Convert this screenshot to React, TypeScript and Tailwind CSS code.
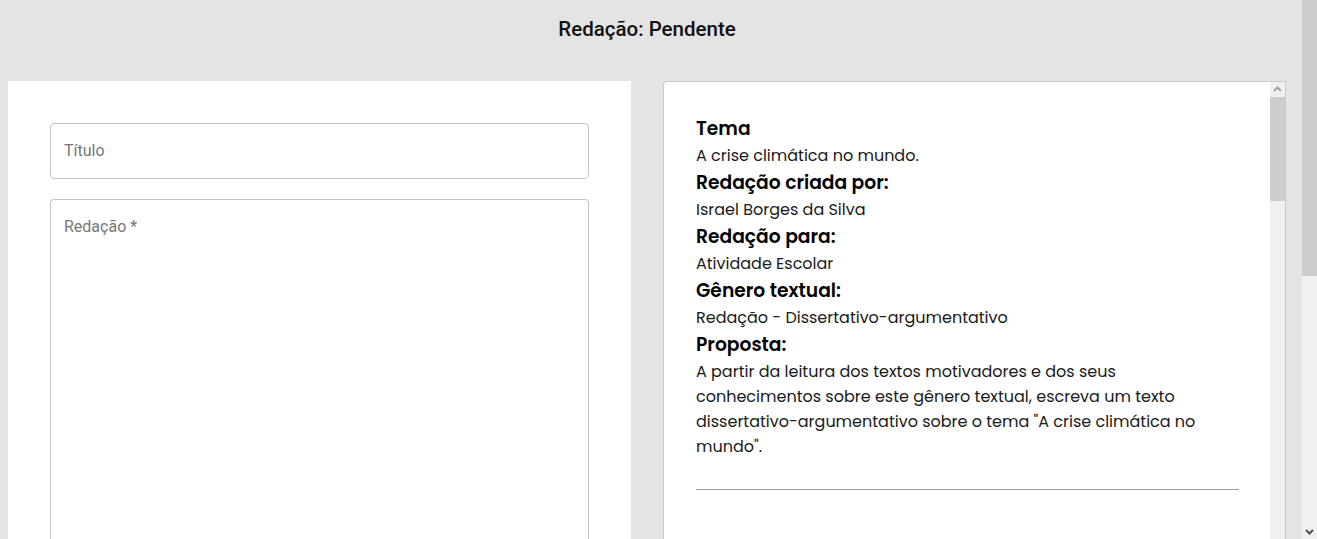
import React from 'react';

const info = [
  { label: 'Tema', value: 'A crise climática no mundo.' },
  { label: 'Redação criada por:', value: 'Israel Borges da Silva' },
  { label: 'Redação para:', value: 'Atividade Escolar' },
  { label: 'Gênero textual:', value: 'Redação - Dissertativo-argumentativo' },
  {
    label: 'Proposta:',
    value:
      'A partir da leitura dos textos motivadores e dos seus conhecimentos sobre este gênero textual, escreva um texto dissertativo-argumentativo sobre o tema "A crise climática no mundo".',
  },
];

function ScrollArrow({ up }: { up?: boolean }) {
  return (
    <svg width="15" height="15" viewBox="0 0 15 15" className="block">
      <path
        d={up ? 'M4 9 L7.5 5.5 L11 9' : 'M4 6 L7.5 9.5 L11 6'}
        fill="none"
        stroke={up ? '#a3a3a3' : '#505050'}
        strokeWidth="2"
      />
    </svg>
  );
}

export default function App() {
  return (
    <div className="flex h-[539px] w-[1317px] overflow-hidden bg-[#e4e4e4]">
      <div className="flex-1 flex flex-col">
        {/* header */}
        <div className="h-[81px] flex justify-center pt-[15px] pr-[8px]">
          <h1 className="text-[20.5px] leading-[28px] font-medium text-[#111] font-['Roboto',sans-serif]">
            Redação: Pendente
          </h1>
        </div>

        <div className="flex-1 flex gap-[32px] pl-[8px] pr-[16px] min-h-0">
          {/* form panel */}
          <div className="w-[623px] bg-white px-[42px] pt-[42px] flex flex-col gap-[20px] font-['Roboto',sans-serif]">
            <div className="h-[56px] border border-[#c4c4c4] rounded-[4px] flex items-center px-[13px] text-[16px] text-[#777]">
              Título
            </div>
            <div className="flex-1 border border-[#c4c4c4] border-b-0 rounded-t-[4px] px-[13px] pt-[15px] text-[16px] text-[#777]">
              Redação *
            </div>
          </div>

          {/* info panel */}
          <div className="w-[623px] bg-white border border-[#c8c8c8] border-b-0 rounded-tl-[4px] flex min-h-0">
            <div className="flex-1 pl-[32px] pr-[31px] pt-[32px] text-black font-['Poppins','Open_Sans',sans-serif]">
              {info.map(item => (
                <div key={item.label}>
                  <div className="text-[18.7px] leading-[29px] font-semibold">{item.label}</div>
                  <p className="text-[16px] leading-[25px] text-[#1a1a1a]">{item.value}</p>
                </div>
              ))}
              <hr className="mt-[30px] border-0 border-t border-[#9a9a9a]" />
            </div>
            {/* inner scrollbar */}
            <div className="w-[15px] bg-[#f0f0f0] flex flex-col">
              <ScrollArrow up />
              <div className="h-[104px] bg-[#cdcdcd]" />
            </div>
          </div>
        </div>
      </div>

      {/* page scrollbar */}
      <div className="w-[15px] bg-[#f0f0f0] flex flex-col">
        <div className="h-[276px] bg-[#cdcdcd]" />
        <div className="flex-1" />
        <ScrollArrow />
      </div>
    </div>
  );
}
